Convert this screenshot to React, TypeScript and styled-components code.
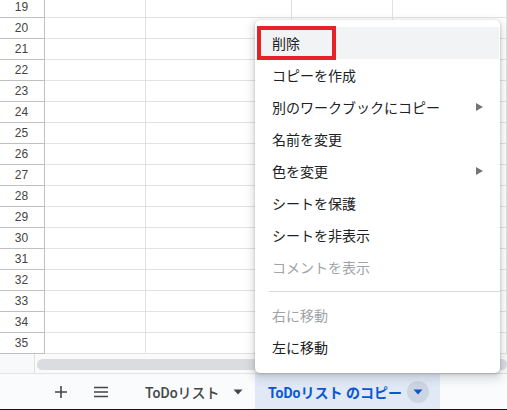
import React from 'react';
import styled, { createGlobalStyle } from 'styled-components';

const GlobalStyle = createGlobalStyle`
  html, body {
    margin: 0;
    padding: 0;
    background: #fff;
  }
  body {
    font-family: "Roboto", "Noto Sans CJK JP", sans-serif;
  }
`;

const Page = styled.div`
  position: relative;
  width: 507px;
  height: 410px;
  overflow: hidden;
  display: flex;
  flex-direction: column;
  background: #fff;
`;

const GridArea = styled.div`
  height: 354px;
  overflow: hidden;
  flex-shrink: 0;
`;

const Rows = styled.div`
  margin-top: -3px;
`;

const Row = styled.div`
  display: grid;
  grid-template-columns: 45px 101px 146px 101px 1fr;
  height: 21px;
`;

const HeaderCell = styled.div`
  box-sizing: border-box;
  border-right: 1px solid #c0c0c0;
  border-bottom: 1px solid #c0c0c0;
  font-family: "Liberation Sans", Arial, sans-serif;
  font-size: 12px;
  color: #444;
  display: flex;
  align-items: center;
  justify-content: center;
  padding-right: 1px;
`;

const Cell = styled.div`
  box-sizing: border-box;
  border-right: 1px solid #e2e2e2;
  border-bottom: 1px solid #e2e2e2;
`;

const ScrollRow = styled.div`
  height: 19px;
  display: flex;
  border-bottom: 1px solid #e2e3e5;
  flex-shrink: 0;
`;

const ScrollCorner = styled.div`
  width: 44px;
  background: #f8f9fa;
  border-right: 1px solid #e2e2e2;
`;

const ScrollTrack = styled.div`
  flex: 1;
  display: flex;
  align-items: center;
  padding-left: 2px;
  background: #fafafa;
`;

const ScrollThumb = styled.div`
  width: 470px;
  height: 11px;
  border-radius: 6px;
  background: #dadce0;
  margin-top: 2px;
`;

const TabBar = styled.div`
  height: 35px;
  display: flex;
  align-items: stretch;
  background: #f9fbfd;
  padding-left: 50px;
  flex-shrink: 0;
`;

const IconButton = styled.div<{ $gap?: number }>`
  width: 22px;
  display: flex;
  align-items: center;
  justify-content: center;
  margin-right: ${p => p.$gap ?? 0}px;
  color: #444;
`;

const Tab = styled.div<{ $active?: boolean; $width: number }>`
  width: ${p => p.$width}px;
  box-sizing: border-box;
  display: flex;
  align-items: center;
  padding-left: ${p => (p.$active ? 13 : 12)}px;
  font-size: 14px;
  font-weight: ${p => (p.$active ? 700 : 500)};
  color: ${p => (p.$active ? '#0b57d0' : '#444746')};
  background: ${p => (p.$active ? '#e1e9f7' : 'transparent')};
  white-space: nowrap;
`;

const TabArrow = styled.span<{ $active?: boolean }>`
  display: flex;
  align-items: center;
  justify-content: center;
  width: 22px;
  height: 22px;
  border-radius: 50%;
  margin-left: ${p => (p.$active ? 5 : 7)}px;
  background: ${p => (p.$active ? '#cdd5e2' : 'transparent')};
  color: ${p => (p.$active ? '#0b57d0' : '#444746')};
`;

const BottomEdge = styled.div`
  height: 2px;
  background: #111;
  flex-shrink: 0;
`;

const Menu = styled.div`
  position: absolute;
  left: 255px;
  top: 20px;
  width: 245px;
  padding: 7px 0 10px;
  background: #fff;
  border-radius: 5px;
  box-shadow: 0 1px 3px rgba(60, 64, 67, 0.3), 0 4px 8px 3px rgba(60, 64, 67, 0.15);
`;

const Item = styled.div<{ $disabled?: boolean; $hover?: boolean }>`
  position: relative;
  height: 32px;
  display: flex;
  align-items: center;
  padding-left: 15px;
  padding-right: 16px;
  font-size: 14px;
  color: ${p => (p.$disabled ? '#a0a4a9' : '#202124')};
  background: ${p => (p.$hover ? '#f1f3f4' : 'transparent')};
  margin: 0 1px 0 2px;
`;

const Label = styled.span`
  flex: 1;
`;

const SubArrow = styled.span`
  width: 0;
  height: 0;
  border-top: 4px solid transparent;
  border-bottom: 4px solid transparent;
  border-left: 7px solid #757575;
`;

const Separator = styled.div`
  height: 1px;
  background: #dadce0;
  margin: 8px 0 7px 14px;
`;

const Highlight = styled.div`
  position: absolute;
  left: 0;
  top: -1px;
  width: 79px;
  height: 34px;
  box-sizing: border-box;
  border: 4px solid #e8202a;
`;

const PlusIcon = () => (
  <svg width="14" height="14" viewBox="0 0 14 14">
    <path d="M7 1v12M1 7h12" stroke="#444746" strokeWidth="1.6" />
  </svg>
);

const ListIcon = () => (
  <svg width="16" height="12" viewBox="0 0 16 12">
    <path d="M1 1.5h14M1 6h14M1 10.5h14" stroke="#444746" strokeWidth="1.6" />
  </svg>
);

const Caret = ({ color }: { color: string }) => (
  <svg width="10" height="6" viewBox="0 0 10 6">
    <path d="M0.5 0.5h9L5 5.5z" fill={color} />
  </svg>
);

const rowNumbers = Array.from({ length: 17 }, (_, i) => 19 + i);

type MenuEntry = { label: string; sub?: boolean; disabled?: boolean };

const topItems: MenuEntry[] = [
  { label: 'コピーを作成' },
  { label: '別のワークブックにコピー', sub: true },
  { label: '名前を変更' },
  { label: '色を変更', sub: true },
  { label: 'シートを保護' },
  { label: 'シートを非表示' },
  { label: 'コメントを表示', disabled: true },
];

const bottomItems: MenuEntry[] = [
  { label: '右に移動', disabled: true },
  { label: '左に移動' },
];

const renderItem = (it: MenuEntry) => (
  <Item key={it.label} $disabled={it.disabled}>
    <Label>{it.label}</Label>
    {it.sub && <SubArrow />}
  </Item>
);

export default function App() {
  return (
    <Page>
      <GlobalStyle />
      <GridArea>
        <Rows>
          {rowNumbers.map(n => (
            <Row key={n}>
              <HeaderCell>{n}</HeaderCell>
              <Cell />
              <Cell />
              <Cell />
              <Cell />
            </Row>
          ))}
        </Rows>
      </GridArea>
      <ScrollRow>
        <ScrollCorner />
        <ScrollTrack>
          <ScrollThumb />
        </ScrollTrack>
      </ScrollRow>
      <TabBar>
        <IconButton $gap={18}>
          <PlusIcon />
        </IconButton>
        <IconButton $gap={21}>
          <ListIcon />
        </IconButton>
        <Tab $width={122}>
          ToDoリスト
          <TabArrow>
            <Caret color="#444746" />
          </TabArrow>
        </Tab>
        <Tab $active $width={185}>
          ToDoリスト のコピー
          <TabArrow $active>
            <Caret color="#0b57d0" />
          </TabArrow>
        </Tab>
      </TabBar>
      <BottomEdge />

      <Menu>
        <Item $hover>
          <Label>削除</Label>
          <Highlight />
        </Item>
        {topItems.map(renderItem)}
        <Separator />
        {bottomItems.map(renderItem)}
      </Menu>
    </Page>
  );
}
